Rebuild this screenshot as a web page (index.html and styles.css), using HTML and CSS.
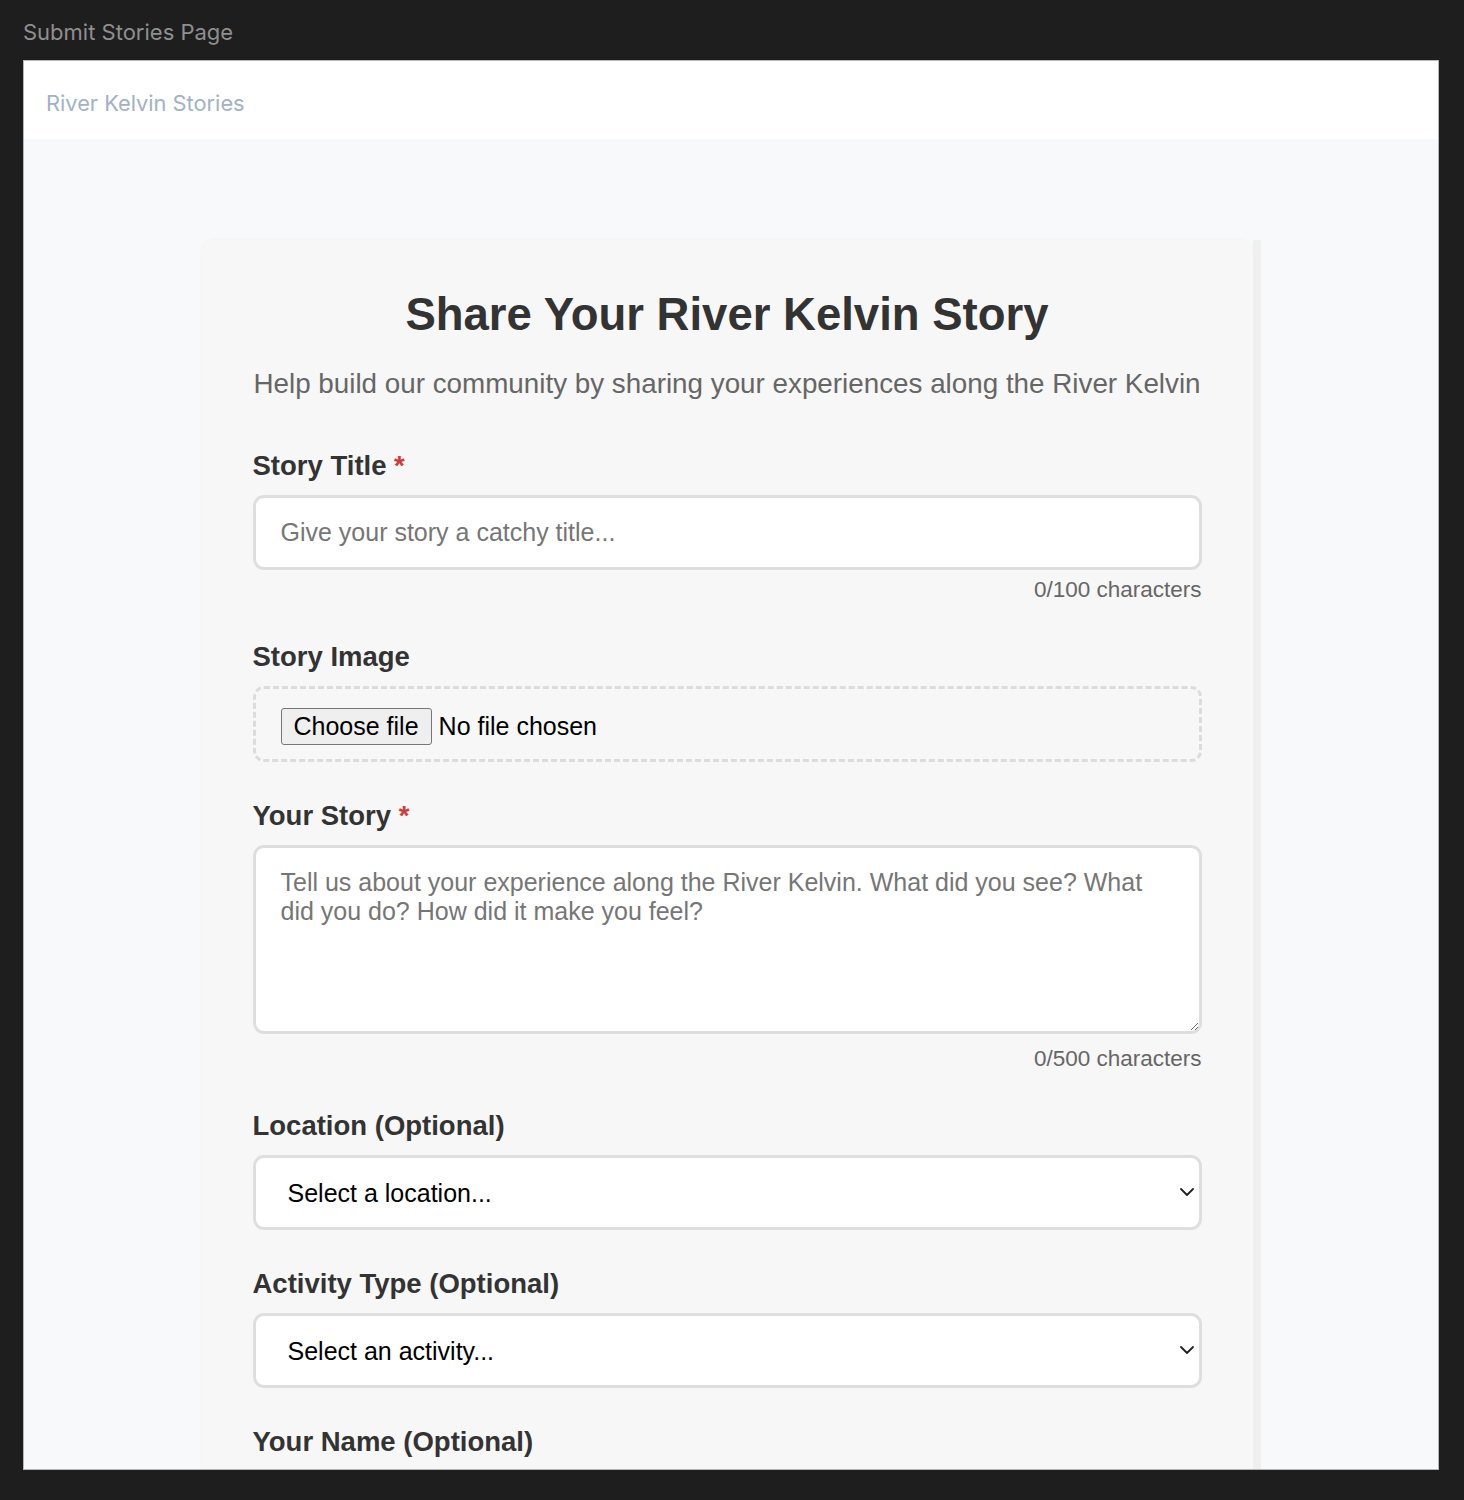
FILE: index.html
```html
<!DOCTYPE html>
<html lang="en">
<head>
<meta charset="utf-8">
<title>Submit Stories Page</title>
<link rel="stylesheet" href="styles.css">
</head>
<body>
<div class="titlebar">Submit Stories Page</div>
<div class="frame">
  <header class="site-header">River Kelvin Stories</header>
  <main class="main">
    <div class="card-wrap">
      <section class="card">
        <h1 class="heading">Share Your River Kelvin Story</h1>
        <p class="subtitle">Help build our community by sharing your experiences along the River Kelvin</p>

        <div class="group">
          <label class="label" for="title">Story Title <span class="req">*</span></label>
          <input class="field" id="title" type="text" placeholder="Give your story a catchy title...">
          <div class="counter">0/100 characters</div>
        </div>

        <div class="group">
          <label class="label" for="image">Story Image</label>
          <div class="filebox">
            <label class="file-btn" for="image">Choose file</label>
            <span class="file-name">No file chosen</span>
            <input class="file-hidden" id="image" type="file">
          </div>
        </div>

        <div class="group">
          <label class="label" for="story">Your Story <span class="req">*</span></label>
          <textarea class="field area" id="story" placeholder="Tell us about your experience along the River Kelvin. What did you see? What did you do? How did it make you feel?"></textarea>
          <div class="counter counter-area">0/500 characters</div>
        </div>

        <div class="group">
          <label class="label" for="loc">Location (Optional)</label>
          <div class="select-wrap">
            <select class="select" id="loc">
              <option>Select a location...</option>
            </select>
            <svg class="chev" width="14" height="8" viewBox="0 0 14 8"><path d="M1 1l6 6 6-6" fill="none" stroke="#222" stroke-width="1.8" stroke-linecap="round" stroke-linejoin="round"/></svg>
          </div>
        </div>

        <div class="group">
          <label class="label" for="act">Activity Type (Optional)</label>
          <div class="select-wrap">
            <select class="select" id="act">
              <option>Select an activity...</option>
            </select>
            <svg class="chev" width="14" height="8" viewBox="0 0 14 8"><path d="M1 1l6 6 6-6" fill="none" stroke="#222" stroke-width="1.8" stroke-linecap="round" stroke-linejoin="round"/></svg>
          </div>
        </div>

        <div class="group">
          <label class="label" for="name">Your Name (Optional)</label>
          <input class="field" id="name" type="text" placeholder="How should we credit you?">
        </div>
      </section>
      <div class="track"></div>
    </div>
  </main>
</div>
</body>
</html>
```

FILE: styles.css
```css
* { box-sizing: border-box; }

html, body {
  margin: 0;
  padding: 0;
  height: 1500px;
  overflow: hidden;
}

body {
  background: #1e1e1e;
  font-family: "Liberation Sans", Arial, sans-serif;
}

.titlebar {
  height: 60px;
  padding: 4px 0 0 23px;
  display: flex;
  align-items: center;
  font-family: Inter, "Noto Sans", sans-serif;
  font-size: 22px;
  color: #8f8f8f;
}

.frame {
  margin-left: 23px;
  width: 1416px;
  height: 1410px;
  border: 1px solid #b5b5b5;
  background: #f8f9fb;
  overflow: hidden;
}

.site-header {
  height: 78px;
  background: #ffffff;
  display: flex;
  align-items: center;
  padding: 6px 0 0 22px;
  font-family: Inter, "Noto Sans", sans-serif;
  font-size: 21.8px;
  color: #a3b1c6;
}

.main {
  padding-top: 101px;
}

.card-wrap {
  width: 1059px;
  margin: 0 auto;
  display: flex;
  align-items: stretch;
}

.card {
  flex: 1;
  background: #f7f7f7;
  border-radius: 12px 12px 0 0;
  box-shadow: 0 0 4px rgba(0, 0, 0, 0.04);
  padding: 49px 51px 60px 51px;
}

.track {
  width: 8px;
  background: #efefef;
}

.heading {
  margin: 0;
  text-align: center;
  font-size: 45.5px;
  line-height: 52px;
  font-weight: 700;
  color: #333333;
}

.subtitle {
  margin: 27px -4px 50px;
  text-align: center;
  white-space: nowrap;
  font-size: 27.8px;
  line-height: 32px;
  color: #666666;
}

.group {
  margin-bottom: 38px;
}

.label {
  display: block;
  font-size: 27.5px;
  line-height: 32px;
  font-weight: 700;
  color: #333333;
  margin-bottom: 13px;
}

.req {
  color: #d03a3a;
}

.field {
  display: block;
  width: 100%;
  height: 75px;
  border: 3px solid #dedede;
  border-radius: 11px;
  background: #ffffff;
  padding: 0 25px;
  font-family: "Liberation Sans", Arial, sans-serif;
  font-size: 25px;
  color: #333333;
  outline: none;
}

.field::placeholder {
  color: #767676;
}

.area {
  height: 189px;
  padding: 20px 25px;
  line-height: 29px;
  resize: vertical;
}

.counter {
  margin-top: 7px;
  text-align: right;
  font-size: 22.5px;
  line-height: 26px;
  color: #666666;
}

.counter-area {
  margin-top: 12px;
}

.filebox {
  height: 76px;
  border: 3px dashed #dcdcdc;
  border-radius: 11px;
  padding: 5px 25px 0;
  display: flex;
  align-items: center;
  gap: 7px;
}

.file-btn {
  display: inline-block;
  font-size: 25px;
  line-height: 29px;
  color: #000000;
  background: #efefef;
  border: 1px solid #767676;
  border-radius: 3px;
  padding: 3px 12px 3px;
}

.file-name {
  font-size: 25px;
  color: #000000;
}

.file-hidden {
  display: none;
}

.select-wrap {
  position: relative;
}

.select {
  display: block;
  width: 100%;
  height: 75px;
  border: 3px solid #dedede;
  border-radius: 11px;
  background: #ffffff;
  padding: 0 40px 0 32px;
  font-family: "Liberation Sans", Arial, sans-serif;
  font-size: 25px;
  color: #000000;
  appearance: none;
  -webkit-appearance: none;
  outline: none;
}

.chev {
  position: absolute;
  right: 8px;
  top: 33px;
  pointer-events: none;
}
```
